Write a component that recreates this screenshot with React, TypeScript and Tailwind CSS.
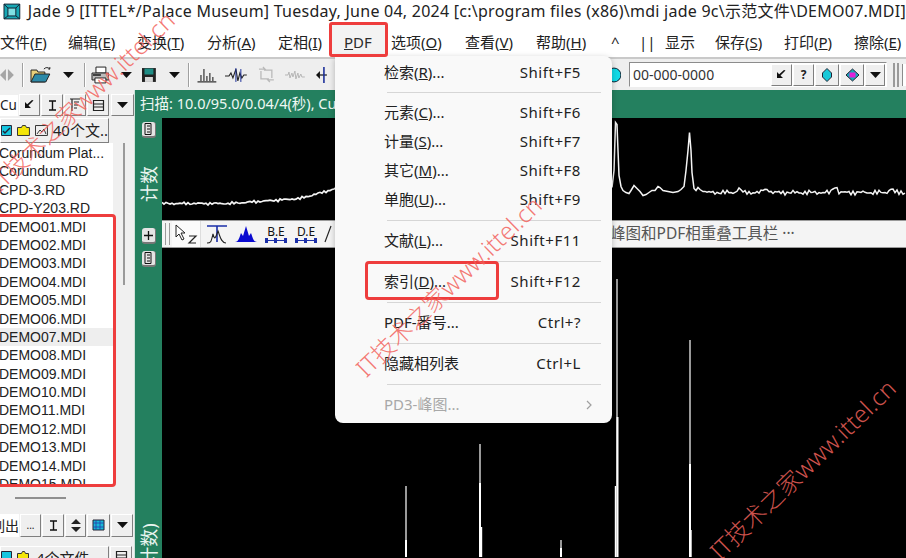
import React from 'react';

const raised =
  'flex items-center justify-center border border-t-white border-l-white border-r-[#7f7f7f] border-b-[#7f7f7f] bg-[#efefef]';

const demoFiles = Array.from({ length: 15 }, (_, i) => `DEMO${String(i + 1).padStart(2, '0')}.MDI`);

// fixed pseudo noise so the trace looks scanned but stays the same on every run
function noise(x: number) {
  return Math.sin(x * 1.7) * 1.1 + Math.sin(x * 4.3) * 0.9 + Math.sin(x * 0.37) * 0.7;
}

function leftTrace() {
  const knots: [number, number][] = [
    [162, 203],
    [230, 203],
    [300, 198],
    [340, 187],
  ];
  const pts: string[] = [];
  for (let x = 162; x <= 340; x += 2) {
    const k = knots.findIndex((p) => p[0] >= x);
    const b = knots[Math.max(k, 1)];
    const a = knots[Math.max(k, 1) - 1];
    const y = a[1] + ((b[1] - a[1]) * (x - a[0])) / (b[0] - a[0]);
    pts.push(`${x},${(y + noise(x) * 0.6).toFixed(1)}`);
  }
  return pts.join(' ');
}

function rightTrace() {
  const head =
    '612,187 614,170 615.5,122 617,124 618,150 619,175 621,186 623,190 626,192 629,193 631,190 634,185 637,188 640,191 643,195 646,194 649,192 652,190 655,190 658,186 660,187 663,190 668,191 673,192 678,191 681,189 684,186 686,170 688,150 689.5,132 691,150 692,172 694,188 696,190 698,187 700,189 703,191';
  const pts: string[] = [head];
  for (let x = 705; x <= 906; x += 2) {
    let y = 192 + noise(x) * 1.1;
    if (x > 735 && x < 742) y -= 3;
    if (x > 762 && x < 770) y -= 3;
    if (x > 831 && x < 838) y -= 5;
    if (x > 888 && x < 894) y -= 3;
    pts.push(`${x},${y.toFixed(1)}`);
  }
  return pts.join(' ');
}

function Caret({ className = '' }: { className?: string }) {
  return (
    <svg width="11" height="6" viewBox="0 0 11 6" className={className}>
      <path d="M0 0h11L5.5 6z" fill="#111" />
    </svg>
  );
}

function ArrowBack() {
  return (
    <svg width="10" height="10" viewBox="0 0 10 10">
      <path d="M8.5 0.5 3.5 5.5 6 8H0V2l2.2 2.2L7 0z" fill="#111" />
    </svg>
  );
}

function IBeam() {
  return (
    <svg width="9" height="11" viewBox="0 0 9 11">
      <path d="M1 1h7M1 10h7M4.5 1v9" stroke="#111" strokeWidth="1.4" fill="none" />
    </svg>
  );
}

function ListBars() {
  return (
    <svg width="12" height="14" viewBox="0 0 12 14">
      <path d="M3 1v12M1 1h10M5 4h5M5 7h4M5 10h3" stroke="#222" strokeWidth="1.2" fill="none" />
    </svg>
  );
}

function BoxRows() {
  return (
    <svg width="13" height="13" viewBox="0 0 13 13">
      <path d="M1.5 1.5h10v10h-10zM1.5 5h10M1.5 8h10" stroke="#222" strokeWidth="1.2" fill="none" />
    </svg>
  );
}

function SideButton({ plus = false }: { plus?: boolean }) {
  return (
    <div className="flex h-[16px] w-[14px] shrink-0 items-center justify-center rounded-[3px] bg-[#e4e4e4] border-b-2 border-r border-[#777]">
      {plus ? (
        <svg width="9" height="9" viewBox="0 0 9 9">
          <path d="M4.5 0v9M0 4.5h9" stroke="#111" strokeWidth="1.3" />
        </svg>
      ) : (
        <svg width="8" height="12" viewBox="0 0 8 12">
          <path d="M1 0.5h6v11H1zM3 3h3M3 6h3M3 9h3" stroke="#111" strokeWidth="1" fill="none" />
        </svg>
      )}
    </div>
  );
}

function SideLabel({ text, className }: { text: string; className: string }) {
  return (
    <div className={`flex w-[18px] shrink-0 items-center justify-center ${className}`}>
      <span className="-rotate-90 whitespace-nowrap text-[18px] leading-[18px] text-[#e9f5f0]">{text}</span>
    </div>
  );
}

function MainToolbarIcons() {
  return (
    <>
      <svg width="16" height="14" viewBox="0 0 16 14" className="ml-[-1px]">
        <path d="M7 1v12L1 7zM9 1v12l6-6z" fill="#a5a5a5" />
      </svg>
      <div className="ml-[7px] h-[24px] w-[2px] border-r border-white bg-[#a0a0a0]" />
      <svg width="23" height="18" viewBox="0 0 23 18" className="ml-[6px]">
        <path d="M1 4h6l1 2h7v10H1z" fill="#e8cf7a" stroke="#222" />
        <path d="M1 16l4-8h15l-4 8z" fill="#2d8aa8" stroke="#222" />
        <path d="M14 3c2-2 4-2 6 0l-1.5 0M20 3V1" stroke="#222" fill="none" />
      </svg>
      <Caret className="ml-[10px]" />
      <div className="ml-[10px] h-[24px] w-[2px] border-r border-white bg-[#a0a0a0]" />
      <svg width="19" height="18" viewBox="0 0 19 18" className="ml-[5px]">
        <path d="M5 1h10v6H5z" fill="#fff" stroke="#222" />
        <path d="M1 7h17v7H1z" fill="#bbb" stroke="#222" />
        <path d="M4 12h11v5H4z" fill="#fff" stroke="#222" />
        <path d="M2 9h8" stroke="#222" strokeWidth="1.6" />
      </svg>
      <Caret className="ml-[12px]" />
      <svg width="16" height="16" viewBox="0 0 16 16" className="ml-[9px]">
        <path d="M1 1h14v14H1z" fill="#222" />
        <path d="M3.5 1.5h9v6h-9z" fill="#1f8d85" />
        <path d="M4 10h8v5H4z" fill="#d8d8d8" />
      </svg>
      <Caret className="ml-[12px]" />
      <div className="ml-[8px] h-[24px] w-[2px] border-r border-white bg-[#a0a0a0]" />
      <svg width="20" height="16" viewBox="0 0 20 16" className="ml-[7px]">
        <path d="M0.5 15h19M4 14V8M7 14V2M10 14V9M13 14V6M16 14V10" stroke="#333" strokeWidth="1.2" fill="none" />
      </svg>
      <svg width="22" height="16" viewBox="0 0 22 16" className="ml-[8px]">
        <path d="M0 9h4l2-3 2 5 3-9 2 12 2-8 2 5 2-3h3" stroke="#222" strokeWidth="1.1" fill="none" />
        <path d="M11 1v14M16 2v13" stroke="#1b2f9a" strokeWidth="1" />
      </svg>
      <svg width="21" height="17" viewBox="0 0 21 17" className="ml-[9px]">
        <path d="M3 3h6l-2-2M18 14h-6l2 2M5 5v8h8M16 12V4H8" stroke="#b9b9b9" strokeWidth="1.3" fill="none" />
      </svg>
      <svg width="20" height="12" viewBox="0 0 20 12" className="ml-[9px]">
        <path d="M0 6h3l1-3 1 6 2-5 1 4 2-6 1 8 2-6 1 5 2-4 1 3h3" stroke="#b5b5b5" strokeWidth="1" fill="none" />
      </svg>
      <svg width="12" height="18" viewBox="0 0 12 18" className="ml-[11px]">
        <path d="M0 9l4-4v8z" fill="#111" />
        <path d="M4 9h7" stroke="#111" strokeWidth="1.2" />
        <path d="M8 1v16" stroke="#1b2f9a" strokeWidth="1.6" />
      </svg>
    </>
  );
}

function PdfLookup() {
  return (
    <div className="flex h-[25px] w-[258px] items-center border border-[#8c8c8c] border-r-white border-b-white bg-white pl-[3px] pr-[1px]">
      <span className="text-[14px] text-[#333]">00-000-0000</span>
      <div className="ml-auto flex items-center gap-[1px]">
        <div className={`${raised} h-[22px] w-[21px]`}>
          <ArrowBack />
        </div>
        <div className={`${raised} h-[22px] w-[21px] text-[12px] font-bold text-[#222]`}>?</div>
        <div className={`${raised} h-[22px] w-[24px]`}>
          <svg width="10" height="14" viewBox="0 0 10 14">
            <path d="M5 0.5 9.5 5v4L5 13.5.5 9V5z" fill="#18c8d8" stroke="#223" />
          </svg>
        </div>
        <div className={`${raised} h-[22px] w-[24px]`}>
          <svg width="15" height="14" viewBox="0 0 15 14">
            <path d="M7.5 1 14 7l-6.5 6L1 7z" fill="#18a8b8" stroke="#223" />
            <path d="M4.5 4.5h6v5h-6z" fill="#e020d8" />
          </svg>
        </div>
        <div className={`${raised} h-[22px] w-[20px]`}>
          <Caret />
        </div>
      </div>
    </div>
  );
}

function PeakToolbar() {
  return (
    <div className="flex h-[28px] shrink-0 items-center bg-[#f4f4f4] border-y border-[#9a9a9a]">
      <div className="ml-[3px] h-[22px] w-[5px] border-x border-[#9a9a9a]" />
      <div className="ml-[2px] flex h-[26px] w-[29px] items-center justify-center bg-[#fbfbfb] border-r border-[#ddd]">
        <svg width="24" height="20" viewBox="0 0 24 20">
          <path d="M2 1v12l3-3 3 6 2-1-3-6h4z" fill="#fff" stroke="#222" />
          <path d="M15 12h7l-7 7h7" stroke="#222" strokeWidth="1.2" fill="none" />
        </svg>
      </div>
      <svg width="24" height="20" viewBox="0 0 24 20" className="ml-[4px]">
        <path d="M2 2h20M12 2v16" stroke="#1b2fa8" strokeWidth="1.6" fill="none" />
        <path d="M2 19c4 0 4-1 6-9 2 8 3 2 5-3 2 5 3 12 8 12" stroke="#222" strokeWidth="1.1" fill="none" />
      </svg>
      <svg width="22" height="18" viewBox="0 0 22 18" className="ml-[6px]">
        <path d="M0 17c3 0 4-3 6-9l2 3 3-10 3 10 2-3c2 6 3 9 6 9z" fill="#0a0ad0" />
      </svg>
      <div className="ml-[8px] flex w-[22px] flex-col items-center">
        <span className="text-[12px] leading-[13px] text-[#111]">B.E</span>
        <svg width="22" height="5" viewBox="0 0 22 5">
          <path d="M0 2.5h22" stroke="#1b2fa8" strokeWidth="1" />
          <path d="M0 0h3v5H0zM9 0h3v5H9zM19 0h3v5h-3z" fill="#1b2fa8" />
        </svg>
      </div>
      <div className="ml-[8px] flex w-[22px] flex-col items-center">
        <span className="text-[12px] leading-[13px] text-[#111]">D.E</span>
        <svg width="22" height="5" viewBox="0 0 22 5">
          <path d="M0 2.5h22" stroke="#1b2fa8" strokeWidth="1" />
          <path d="M0 0h3v5H0zM9 0h3v5H9zM19 0h3v5h-3z" fill="#1b2fa8" />
        </svg>
      </div>
      <svg width="8" height="18" viewBox="0 0 8 18" className="ml-[7px]">
        <path d="M1 17 7 1" stroke="#222" strokeWidth="1.2" />
      </svg>
      <span className="ml-[278px] whitespace-nowrap text-[15.5px] text-[#555]">峰图和PDF相重叠工具栏 ···</span>
    </div>
  );
}

function MenuRow({ label, hint, mark }: { label: string; hint: string; mark?: string }) {
  const [before, after] = mark ? label.split(mark) : [label, ''];
  return (
    <div className="flex h-[29px] items-center justify-between pl-[49px] pr-[31px] text-[15px] text-[#222]">
      <span>
        {before}
        {mark && <u>{mark}</u>}
        {after}
      </span>
      <span className="tracking-[0.55px]">{hint}</span>
    </div>
  );
}

function MenuSeparator({ short = false }: { short?: boolean }) {
  return (
    <div className={`flex items-center pl-[52px] pr-[11px] ${short ? 'h-[11px]' : 'h-[12px]'}`}>
      <div className="h-[1px] w-full bg-[#d6d6d6]" />
    </div>
  );
}

function TopMenu({ label, mark, width }: { label: string; mark?: string; width: string }) {
  const [before, after] = mark ? label.split(mark) : [label, ''];
  return (
    <span className={`shrink-0 whitespace-nowrap ${width}`}>
      {before}
      {mark && <u>{mark}</u>}
      {after}
    </span>
  );
}

export default function App() {
  return (
    <div className="relative flex h-[558px] w-[906px] flex-col overflow-hidden bg-white font-['Noto_Sans','Noto_Sans_CJK_SC',sans-serif] text-[#222]">
      <div className="flex h-[24px] shrink-0 items-center pl-[3px] pb-[2px]">
        <svg width="18" height="17" viewBox="0 0 18 17">
          <path d="M1 1h16v15H1z" fill="#16a7b4" stroke="#123" />
          <path d="M5 5h8v8H5zM1 1l4 4M17 1l-4 4M1 16l4-3M17 16l-4-3" stroke="#123" fill="#7fe0e4" />
        </svg>
        <span className="ml-[7px] whitespace-nowrap text-[16px] tracking-[0.25px] text-[#222]">
          Jade 9 [ITTEL*/Palace Museum] Tuesday, June 04, 2024 [c:\program files (x86)\mdi jade 9c\示范文件\DEMO07.MDI]
        </span>
      </div>

      <div className="mt-[6px] flex h-[24px] shrink-0 items-center text-[15px] text-[#222]">
        <TopMenu label="文件(F)" mark="F" width="w-[68px]" />
        <TopMenu label="编辑(E)" mark="E" width="w-[69px]" />
        <TopMenu label="变换(T)" mark="T" width="w-[70px]" />
        <TopMenu label="分析(A)" mark="A" width="w-[71px]" />
        <TopMenu label="定相(I)" mark="I" width="w-[66px]" />
        <TopMenu label="PDF" mark="P" width="w-[47px]" />
        <TopMenu label="选项(O)" mark="O" width="w-[74px]" />
        <TopMenu label="查看(V)" mark="V" width="w-[71px]" />
        <TopMenu label="帮助(H)" mark="H" width="w-[75px]" />
        <TopMenu label="^" width="w-[28px]" />
        <TopMenu label="||" width="w-[26px]" />
        <TopMenu label="显示" width="w-[50px]" />
        <TopMenu label="保存(S)" mark="S" width="w-[69px]" />
        <TopMenu label="打印(P)" mark="P" width="w-[70px]" />
        <TopMenu label="擦除(E)" mark="E" width="w-[52px]" />
      </div>

      <div className="mt-[3px] flex h-[33px] shrink-0 items-center bg-[#eeeeee] border-t-2 border-[#c9c9c9]">
        <MainToolbarIcons />
        <svg width="10" height="16" viewBox="0 0 10 16" className="ml-[283px]">
          <circle cx="3" cy="8" r="7" fill="#10dbe8" stroke="#123" />
        </svg>
        <div className="ml-[8px]">
          <PdfLookup />
        </div>
        <div className="ml-[6px] h-[24px] w-[6px] border-x-2 border-[#9a9a9a]" />
        <div className="ml-[3px] h-[22px] w-[4px] bg-white border-l border-[#8c8c8c]" />
      </div>

      <div className="flex min-h-0 flex-1">
        <div className="flex w-[135px] shrink-0 flex-col bg-[#f0f0f0] border-r border-[#cfe2da]">
          <div className="flex h-[28px] shrink-0 items-center gap-[1px] pt-[2px]">
            <div className="flex h-[21px] w-[18px] items-center bg-white pl-0 text-[13.5px]">Cu</div>
            <div className={`${raised} h-[22px] w-[21px]`}>
              <ArrowBack />
            </div>
            <div className={`${raised} h-[22px] w-[22px]`}>
              <IBeam />
            </div>
            <div className={`${raised} h-[22px] w-[22px]`}>
              <ListBars />
            </div>
            <div className={`${raised} h-[22px] w-[22px]`}>
              <BoxRows />
            </div>
            <div className={`${raised} ml-[1px] h-[22px] w-[23px]`}>
              <Caret />
            </div>
          </div>
          <div className={`${raised} h-[25px] w-[109px] shrink-0 justify-start gap-[5px]`}>
            <svg width="11" height="11" viewBox="0 0 11 11">
              <path d="M0.5 0.5h10v10h-10z" fill="#15c6e0" stroke="#223" />
              <path d="M2 6l2 2 5-5" stroke="#223" strokeWidth="1.4" fill="none" />
            </svg>
            <svg width="13" height="11" viewBox="0 0 13 11">
              <path d="M0.5 2.5h4l1-2h3l1 2h3v8h-12z" fill="#f5e60a" stroke="#333" />
            </svg>
            <svg width="13" height="11" viewBox="0 0 13 11">
              <path d="M0.5 0.5h12v10h-12zM2 9l3-4 2 2 2-3 2 5" stroke="#333" fill="none" />
            </svg>
            <span className="whitespace-nowrap text-[15px] leading-none">40个文..</span>
          </div>
          <div className="flex h-[343px] shrink-0">
            <div className="w-[113px] overflow-hidden bg-white pt-[1px] text-[#222]">
              <div className="-ml-[1px] whitespace-nowrap font-['Liberation_Sans','Noto_Sans_CJK_SC',sans-serif] text-[14px] leading-[18.4px]">
                <div className="h-[18.4px]">Corundum Plat...</div>
                <div className="h-[18.4px]">Corundum.RD</div>
                <div className="h-[18.4px]">CPD-3.RD</div>
                <div className="h-[18.4px]">CPD-Y203.RD</div>
                {demoFiles.map((name) => (
                  <div key={name} className={`h-[18.4px] ${name === 'DEMO07.MDI' ? 'bg-[#eeeeee]' : ''}`}>
                    {name}
                  </div>
                ))}
              </div>
            </div>
            <div className="flex w-[21px] justify-center bg-[#f0f0f0]">
              <div className="h-[142px] w-[2px] bg-[#9a9a9a]" />
            </div>
          </div>
          <div className="flex h-[24px] shrink-0 items-center pl-[15px]">
            <div className="h-[2px] w-[51px] bg-[#8f8f8f]" />
          </div>
          <div className="mt-[3px] flex h-[24px] shrink-0 items-center gap-[1px]">
            <div className="flex h-[23px] w-[19px] items-center justify-end overflow-hidden whitespace-nowrap bg-white text-[14px]">
              列出
            </div>
            <div className={`${raised} h-[23px] w-[21px] text-[10px]`}>...</div>
            <div className={`${raised} h-[23px] w-[22px]`}>
              <IBeam />
            </div>
            <div className={`${raised} h-[23px] w-[21px]`}>
              <svg width="10" height="13" viewBox="0 0 10 13">
                <path d="M5 0 10 5H0zM5 13 0 8h10z" fill="#222" />
              </svg>
            </div>
            <div className={`${raised} h-[23px] w-[23px]`}>
              <svg width="13" height="12" viewBox="0 0 13 12">
                <path d="M1 1h11v10H1z" fill="#18b8d8" stroke="#223" />
                <path d="M4 1v10M8 1v10M1 4h11M1 8h11" stroke="#2a3aa8" strokeWidth="0.8" />
              </svg>
            </div>
            <div className={`${raised} h-[23px] w-[22px]`}>
              <Caret />
            </div>
          </div>
          <div className="mt-[9px] flex h-[24px] shrink-0 items-start">
            <div className={`${raised} h-[24px] w-[109px] shrink-0 items-start justify-start gap-[5px] pt-[4px]`}>
              <svg width="11" height="11" viewBox="0 0 11 11">
                <path d="M0.5 0.5h10v10h-10z" fill="#15c6e0" stroke="#223" />
              </svg>
              <svg width="12" height="11" viewBox="0 0 12 11">
                <path d="M0.5 2.5h4l1-2h2l1 2h3v8h-11z" fill="#f5e60a" stroke="#333" />
              </svg>
              <span className="ml-[2px] whitespace-nowrap text-[15px] leading-[15px]">4个文件</span>
            </div>
            <div className={`${raised} ml-[1px] h-[24px] w-[22px] items-start pt-[3px]`}>
              <BoxRows />
            </div>
          </div>
        </div>

        <div className="flex min-w-0 flex-1 flex-col">
          <div className="flex h-[28px] shrink-0 items-center whitespace-nowrap bg-[#24805f] pl-[5px] text-[14.5px] text-[#eef7f3]">
            扫描: 10.0/95.0/0.04/4(秒), Cu
          </div>
          <div className="flex min-h-0 flex-1">
            <div className="flex w-[27px] shrink-0 flex-col items-center overflow-hidden bg-[#24805f] pt-[4px]">
              <SideButton />
              <SideLabel text="计数" className="mt-[27px] h-[38px]" />
              <div className="mt-[25px]">
                <SideButton plus />
              </div>
              <div className="mt-[7px]">
                <SideButton />
              </div>
              <SideLabel text="计数)" className="mt-[255px] h-[44px]" />
            </div>
            <div className="flex min-w-0 flex-1 flex-col">
              <svg viewBox="162 118 744 101" className="block h-[102px] w-full shrink-0 bg-black">
                <polyline points={leftTrace()} fill="none" stroke="#f4f4f4" strokeWidth="1.7" />
                <polyline points={rightTrace()} fill="none" stroke="#f4f4f4" strokeWidth="1.5" />
              </svg>
              <PeakToolbar />
              <svg viewBox="162 250 744 308" className="block w-full flex-1 bg-black">
                <path
                  d="M406 487V558M480 445V558M561 541V558M617 280V558M690 341V558"
                  stroke="#fff"
                  strokeWidth="1.2"
                  fill="none"
                />
                <path
                  d="M406 541V558M480 484V558M561 549V558M617.5 418V558M690 465V558"
                  stroke="#fff"
                  strokeWidth="2"
                  fill="none"
                />
                <path d="M481.5 528V558M615.5 487V558M691 531V558" stroke="#fff" strokeWidth="1.4" fill="none" />
              </svg>
            </div>
          </div>
        </div>
      </div>

      {/* open PDF menu */}
      <div className="absolute left-[335px] top-[56px] w-[277px] rounded-b-lg rounded-tr-lg bg-[#f9f9f9] pt-[2px] pb-[4px] shadow-[0_2px_6px_rgba(0,0,0,0.25)]">
        <MenuRow label="检索(R)..." hint="Shift+F5" mark="R" />
        <MenuSeparator short />
        <MenuRow label="元素(C)..." hint="Shift+F6" mark="C" />
        <MenuRow label="计量(S)..." hint="Shift+F7" mark="S" />
        <MenuRow label="其它(M)..." hint="Shift+F8" mark="M" />
        <MenuRow label="单胞(U)..." hint="Shift+F9" mark="U" />
        <MenuSeparator />
        <MenuRow label="文献(L)..." hint="Shift+F11" mark="L" />
        <MenuSeparator />
        <MenuRow label="索引(D)..." hint="Shift+F12" mark="D" />
        <MenuSeparator />
        <MenuRow label="PDF-番号..." hint="Ctrl+?" />
        <MenuSeparator />
        <MenuRow label="隐藏相列表" hint="Ctrl+L" />
        <MenuSeparator />
        <div className="flex h-[29px] items-center justify-between pl-[49px] pr-[20px] text-[15px] text-[#a8a8a8]">
          <span>PD3-峰图...</span>
          <svg width="6" height="10" viewBox="0 0 6 10">
            <path d="M1 1l4 4-4 4" stroke="#a0a0a0" strokeWidth="1.2" fill="none" />
          </svg>
        </div>
      </div>

      {/* red annotation boxes */}
      <div className="absolute left-[329px] top-[22px] h-[35px] w-[59px] rounded-[3px] border-[3px] border-[#ee3d3d] bg-[#888888]/10" />
      <div className="absolute left-[365px] top-[261px] h-[39px] w-[134px] rounded-[4px] border-[3px] border-[#ee3d3d]" />
      <div className="absolute left-[-6px] top-[214px] h-[273px] w-[122px] rounded-[4px] border-[3px] border-[#ee3d3d]" />

      {/* site watermark */}
      <div className="absolute left-[-7px] top-[172px] origin-left rotate-[-44deg] whitespace-nowrap text-[24px] font-light leading-[30px] text-[#f2625c]/85">
        IT技术之家www.ittel.cn
      </div>
      <div className="absolute left-[360px] top-[357px] origin-left rotate-[-44deg] whitespace-nowrap text-[24px] font-light leading-[30px] text-[#f2625c]/85">
        IT技术之家www.ittel.cn
      </div>
      <div className="absolute left-[714px] top-[540px] origin-left rotate-[-44deg] whitespace-nowrap text-[24px] font-light leading-[30px] text-[#f2625c]/85">
        IT技术之家www.ittel.cn
      </div>
    </div>
  );
}
